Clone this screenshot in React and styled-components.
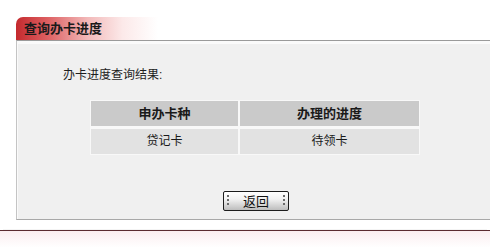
import React from "react";
import styled, { createGlobalStyle } from "styled-components";

const GlobalStyle = createGlobalStyle`
  html, body {
    margin: 0;
    padding: 0;
    background: #fff;
  }
  body {
    font-family: "Liberation Sans", "Noto Sans CJK SC", sans-serif;
    font-size: 12px;
    color: #222;
  }
`;

const Page = styled.div`
  width: 490px;
  height: 247px;
  overflow: hidden;
  padding-top: 17px;
  box-sizing: border-box;
`;

const Tab = styled.div`
  margin-left: 16px;
  width: 142px;
  height: 23px;
  box-sizing: border-box;
  padding-left: 8px;
  border-top-left-radius: 7px;
  background: linear-gradient(
    to right,
    #c42a2e 0%,
    #dd5f61 22%,
    #f2b8b8 50%,
    #fce9e9 75%,
    #ffffff 100%
  );
  font-size: 13px;
  font-weight: bold;
  line-height: 24px;
  color: #1a1a1a;
`;

const Panel = styled.div`
  margin: 0 -20px 0 16px;
  height: 180px;
  box-sizing: border-box;
  background: #f0f0f0;
  border-top: 1px solid #9a9a9a;
  border-left: 1px solid #c4c4c4;
  border-bottom: 1px solid #a8a8a8;
  box-shadow: inset 1px 3px 0 #fafafa;
  padding: 27px 0 0 46px;
`;

const Caption = styled.div`
  font-size: 12px;
  line-height: 14px;
  color: #1e1e1e;
`;

const Content = styled.div`
  margin: 18px 0 0 27px;
  width: 330px;
`;

const Table = styled.div`
  display: grid;
  grid-template-columns: 147px 1fr;
  gap: 3px 2px;
  padding: 1px;
  background: #f8f8f8;
`;

const Cell = styled.div`
  height: 25px;
  line-height: 25px;
  text-align: center;
  background: ${(p) => (p.$head ? "#cacaca" : "#e2e2e2")};
  font-weight: ${(p) => (p.$head ? "bold" : "normal")};
  font-size: ${(p) => (p.$head ? "13px" : "12px")};
  color: #1a1a1a;
`;

const ButtonRow = styled.div`
  display: flex;
  justify-content: center;
  margin-top: 36px;
`;

const Button = styled.button`
  position: relative;
  width: 66px;
  height: 20px;
  margin-left: 2px;
  padding: 0;
  border: 1px solid #1c1c1c;
  border-radius: 2px;
  background: linear-gradient(to bottom, #ffffff 0%, #f2f2f2 40%, #bdbdbd 100%);
  font-family: "Liberation Sans", "Noto Sans CJK SC", sans-serif;
  font-size: 13px;
  line-height: 17px;
  color: #111;
  &::before,
  &::after {
    content: "";
    position: absolute;
    top: 3px;
    bottom: 3px;
    width: 2px;
    background: repeating-linear-gradient(
      to bottom,
      #6a6a6a 0,
      #6a6a6a 2px,
      transparent 2px,
      transparent 4px
    );
  }
  &::before {
    left: 3px;
  }
  &::after {
    right: 3px;
  }
`;

const Footer = styled.div`
  margin-top: 10px;
  height: 17px;
  border-top: 1px solid #5b2c30;
  background: linear-gradient(to bottom, #fbeef0 0%, #ffffff 100%);
  box-shadow: 0 -4px 0 -3px #f4f4f4;
`;

export default function App() {
  return (
    <Page>
      <GlobalStyle />
      <Tab>查询办卡进度</Tab>
      <Panel>
        <Caption>办卡进度查询结果:</Caption>
        <Content>
          <Table>
            <Cell $head>申办卡种</Cell>
            <Cell $head>办理的进度</Cell>
            <Cell>贷记卡</Cell>
            <Cell>待领卡</Cell>
          </Table>
          <ButtonRow>
            <Button>返回</Button>
          </ButtonRow>
        </Content>
      </Panel>
      <Footer />
    </Page>
  );
}
